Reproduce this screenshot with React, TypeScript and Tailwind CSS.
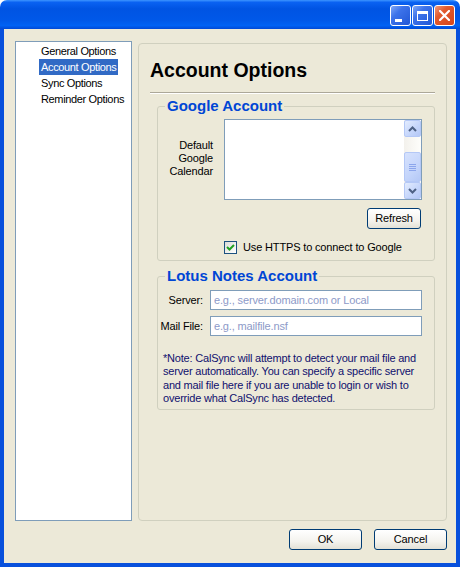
import React from 'react';

const NAV_ITEMS = ['General Options', 'Account Options', 'Sync Options', 'Reminder Options'];

const TitleButton: React.FC<{ kind: 'min' | 'max' | 'close' }> = ({ kind }) => {
  const isClose = kind === 'close';
  return (
    <div
      className={`w-[21px] h-[21px] rounded-[3px] border border-white flex items-center justify-center ${
        isClose
          ? 'bg-[linear-gradient(135deg,#f19a7c_0%,#e25a2e_35%,#d5451b_100%)]'
          : 'bg-[linear-gradient(135deg,#7fa8f7_0%,#3d73ea_35%,#2157d6_100%)]'
      }`}
    >
      {kind === 'min' && <div className="w-[7px] h-[3px] bg-white mt-[9px] mr-[4px]" />}
      {kind === 'max' && <div className="w-[11px] h-[10px] border border-white border-t-[3px]" />}
      {kind === 'close' && (
        <svg width="11" height="11" viewBox="0 0 11 11">
          <path d="M1 1 L10 10 M10 1 L1 10" stroke="white" strokeWidth="2.2" strokeLinecap="square" />
        </svg>
      )}
    </div>
  );
};

const XpButton: React.FC<{ label: string; className?: string }> = ({ label, className = '' }) => (
  <button
    className={`h-[21px] rounded-[3px] border border-[#003c74] bg-[linear-gradient(to_bottom,#ffffff_0%,#f4f3ee_60%,#e3e1d6_100%)] text-[11px] leading-none text-black ${className}`}
  >
    {label}
  </button>
);

const ScrollButton: React.FC<{ dir: 'up' | 'down' }> = ({ dir }) => (
  <div className="h-[17px] rounded-[2px] border border-[#b4c8f6] bg-[linear-gradient(135deg,#e3ecfe_0%,#c4d5fb_60%,#b4c8f6_100%)] flex items-center justify-center">
    <svg width="9" height="6" viewBox="0 0 9 6">
      <path
        d={dir === 'up' ? 'M1 5 L4.5 1.5 L8 5' : 'M1 1 L4.5 4.5 L8 1'}
        fill="none"
        stroke="#4d6185"
        strokeWidth="2"
      />
    </svg>
  </div>
);

const Checkbox: React.FC = () => (
  <div className="w-[13px] h-[13px] border border-[#1c5180] bg-[linear-gradient(135deg,#dcdcd7_0%,#ffffff_100%)] flex items-center justify-center">
    <svg width="9" height="9" viewBox="0 0 9 9">
      <path d="M1 4 L3.5 6.5 L8 2" fill="none" stroke="#21a121" strokeWidth="2" />
    </svg>
  </div>
);

export default function App() {
  return (
    <div className="w-[460px] h-[567px] flex flex-col font-['Liberation_Sans',Arial,sans-serif] text-[11px] tracking-[-0.15px] text-black">
      {/* title bar */}
      <div className="h-[29px] rounded-t-[7px] bg-[linear-gradient(to_bottom,#3d95ff_0%,#0a62f2_8%,#0054e3_30%,#0058e8_70%,#0062f4_88%,#0049d6_100%)] flex justify-end gap-[1px] pt-[5px] pr-[5px]">
        <TitleButton kind="min" />
        <TitleButton kind="max" />
        <TitleButton kind="close" />
      </div>

      {/* client area */}
      <div className="flex-1 flex flex-col bg-[#ece9d8] border-x-4 border-b-4 border-[#0850dc] pl-[11px] pr-[9px] pt-[12px] pb-[13px]">
        <div className="flex-1 flex gap-[6px]">
          {/* nav list */}
          <div className="w-[117px] border border-[#7f9db9] bg-white pt-[1px] flex flex-col overflow-hidden">
            {NAV_ITEMS.map(item => {
              const selected = item === 'Account Options';
              return (
                <div key={item} className="h-[16px] pl-[23px] flex">
                  <span
                    className={`px-[2px] leading-[16px] whitespace-nowrap tracking-[-0.35px] ${selected ? 'bg-[#316ac5] text-white' : ''}`}
                  >
                    {item}
                  </span>
                </div>
              );
            })}
          </div>

          {/* options panel */}
          <div className="flex-1 mt-[2px] border border-[#d0d0bf] rounded-[4px] px-[11px] pt-[15px]">
            <h1 className="text-[19.5px] leading-[22px] font-bold tracking-normal">Account Options</h1>
            <div className="mt-[11px] h-[2px] border-t border-[#aca899] border-b border-b-white" />

            <div className="ml-[7px]">
              {/* Google */}
              <fieldset className="mt-[4px] border border-[#d0d0bf] rounded-[3px] pr-[12px] pb-[6px]">
                <legend className="ml-[7px] px-[2px] text-[15px] leading-[16px] font-bold text-[#0046d5] tracking-normal">
                  Google Account
                </legend>
                <div className="flex mt-[5px]">
                  <div className="w-[55px] flex items-center justify-end text-right leading-[13px] pb-[3px]">
                    Default
                    <br />
                    Google
                    <br />
                    Calendar
                  </div>
                  <div className="ml-[11px] flex-1 h-[81px] border border-[#7f9db9] bg-white flex justify-end">
                    <div className="w-[17px] flex flex-col bg-[linear-gradient(to_right,#f3f1ec_0%,#fefefb_100%)]">
                      <ScrollButton dir="up" />
                      <div className="flex-1 flex flex-col justify-end">
                        <div className="h-[30px] rounded-[2px] border border-[#b4c8f6] bg-[linear-gradient(135deg,#d6e2fd_0%,#c4d5fb_60%,#b4c8f6_100%)] flex flex-col items-center justify-center gap-[1px]">
                          <div className="w-[7px] h-px bg-[#8ca6ec]" />
                          <div className="w-[7px] h-px bg-[#8ca6ec]" />
                          <div className="w-[7px] h-px bg-[#8ca6ec]" />
                          <div className="w-[7px] h-px bg-[#8ca6ec]" />
                        </div>
                      </div>
                      <ScrollButton dir="down" />
                    </div>
                  </div>
                </div>
                <div className="flex justify-end mt-[8px] mr-[1px]">
                  <XpButton label="Refresh" className="w-[54px]" />
                </div>
                <label className="flex items-center gap-[6px] mt-[12px] ml-[66px] leading-[13px]">
                  <Checkbox />
                  <span className="whitespace-nowrap">Use HTTPS to connect to Google</span>
                </label>
              </fieldset>

              {/* Lotus Notes */}
              <fieldset className="mt-[7px] border border-[#d0d0bf] rounded-[3px] pr-[12px] pb-[4px]">
                <legend className="ml-[7px] px-[2px] text-[15px] leading-[16px] font-bold text-[#0046d5] tracking-normal">
                  Lotus Notes Account
                </legend>
                <div className="mt-[6px] flex flex-col gap-[6px]">
                  <div className="flex items-center">
                    <span className="w-[45px] text-right whitespace-nowrap">Server:</span>
                    <input
                      className="ml-[7px] flex-1 h-[20px] border border-[#7f9db9] bg-white px-[3px] text-[11px] outline-none placeholder:text-[#8d9ac8]"
                      placeholder="e.g., server.domain.com or Local"
                    />
                  </div>
                  <div className="flex items-center">
                    <span className="w-[45px] text-right whitespace-nowrap">Mail File:</span>
                    <input
                      className="ml-[7px] flex-1 h-[20px] border border-[#7f9db9] bg-white px-[3px] text-[11px] outline-none placeholder:text-[#8d9ac8]"
                      placeholder="e.g., mailfile.nsf"
                    />
                  </div>
                </div>
                <p className="mt-[16px] pl-[5px] leading-[13.3px] text-[#10106e] whitespace-nowrap tracking-[-0.2px]">
                  *Note: CalSync will attempt to detect your mail file and
                  <br />
                  server automatically. You can specify a specific server
                  <br />
                  and mail file here if you are unable to login or wish to
                  <br />
                  override what CalSync has detected.
                </p>
              </fieldset>
            </div>
          </div>
        </div>

        <div className="flex justify-end gap-[12px] mt-[8px]">
          <XpButton label="OK" className="w-[73px]" />
          <XpButton label="Cancel" className="w-[73px]" />
        </div>
      </div>
    </div>
  );
}
